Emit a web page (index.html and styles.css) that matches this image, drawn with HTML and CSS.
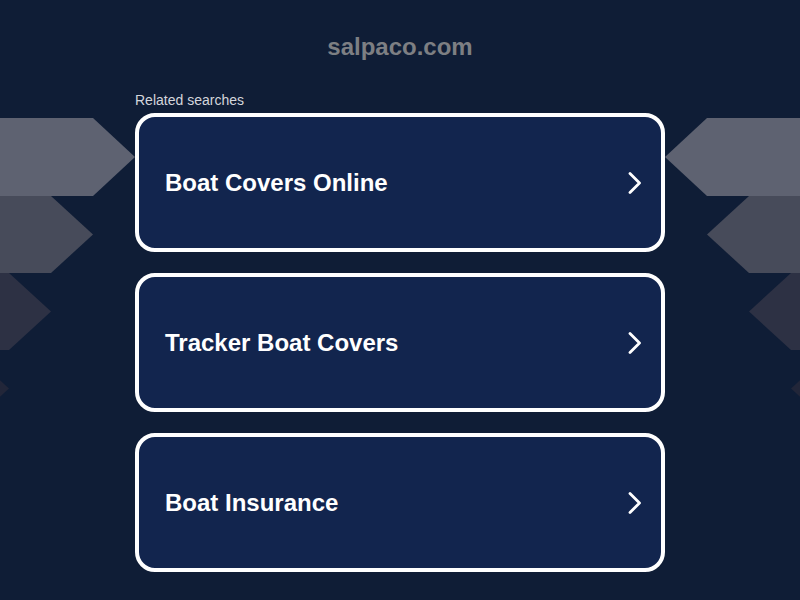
FILE: index.html
```html
<!DOCTYPE html>
<html lang="en">
<head>
<meta charset="utf-8">
<title>salpaco.com</title>
<link rel="stylesheet" href="styles.css">
</head>
<body>
<svg class="deco" width="800" height="600" viewBox="0 0 800 600" aria-hidden="true">
  <g>
    <polygon fill="#5e6271" points="0,118 93,118 135,157 93,196 0,196"/>
    <polygon fill="#474b5a" points="0,196 51,196 93,234.5 51,273 0,273"/>
    <polygon fill="#2d3144" points="0,273 9,273 51,311.5 9,350 0,350"/>
    <polygon fill="#222639" points="-33,350 -33,350 9,388.5 -33,427"/>
  </g>
  <g transform="translate(800,0) scale(-1,1)">
    <polygon fill="#5e6271" points="0,118 93,118 135,157 93,196 0,196"/>
    <polygon fill="#474b5a" points="0,196 51,196 93,234.5 51,273 0,273"/>
    <polygon fill="#2d3144" points="0,273 9,273 51,311.5 9,350 0,350"/>
    <polygon fill="#222639" points="-33,350 -33,350 9,388.5 -33,427"/>
  </g>
</svg>
<main class="page">
  <h1 class="domain">salpaco.com</h1>
  <section class="related">
    <p class="label">Related searches</p>
    <a class="card" href="#"><span class="card-text">Boat Covers Online</span><svg class="chev" width="14" height="22" viewBox="0 0 14 22"><polyline points="2,1.5 11.5,11 2,20.5" fill="none" stroke="#fff" stroke-width="2.8" stroke-linecap="round" stroke-linejoin="round"/></svg></a>
    <a class="card" href="#"><span class="card-text">Tracker Boat Covers</span><svg class="chev" width="14" height="22" viewBox="0 0 14 22"><polyline points="2,1.5 11.5,11 2,20.5" fill="none" stroke="#fff" stroke-width="2.8" stroke-linecap="round" stroke-linejoin="round"/></svg></a>
    <a class="card" href="#"><span class="card-text">Boat Insurance</span><svg class="chev" width="14" height="22" viewBox="0 0 14 22"><polyline points="2,1.5 11.5,11 2,20.5" fill="none" stroke="#fff" stroke-width="2.8" stroke-linecap="round" stroke-linejoin="round"/></svg></a>
  </section>
</main>
</body>
</html>
```
FILE: styles.css
```css
html, body {
  margin: 0;
  padding: 0;
  background: #0f1d36;
  height: 100%;
  overflow: hidden;
}
body {
  font-family: Arial, "Liberation Sans", sans-serif;
  position: relative;
}
.deco {
  position: absolute;
  left: 0;
  top: 0;
  z-index: 0;
}
.page {
  position: relative;
  z-index: 1;
  display: flex;
  flex-direction: column;
  align-items: center;
}
.domain {
  margin: 0;
  padding-top: 33px;
  font-size: 24px;
  line-height: 28px;
  font-weight: bold;
  color: #7d7f83;
}
.related {
  width: 530px;
  margin-top: 31px;
  display: flex;
  flex-direction: column;
  gap: 21px;
}
.label {
  margin: 0 0 -16px 0;
  font-size: 14px;
  line-height: 16px;
  color: #d4d6dc;
}
.card {
  box-sizing: border-box;
  height: 139px;
  border: 4px solid #ffffff;
  border-radius: 20px;
  background: #12254e;
  display: flex;
  align-items: center;
  justify-content: space-between;
  padding: 0 19px 0 26px;
  text-decoration: none;
}
.card-text {
  color: #ffffff;
  font-size: 24px;
  font-weight: bold;
}
.chev {
  display: block;
}
```
